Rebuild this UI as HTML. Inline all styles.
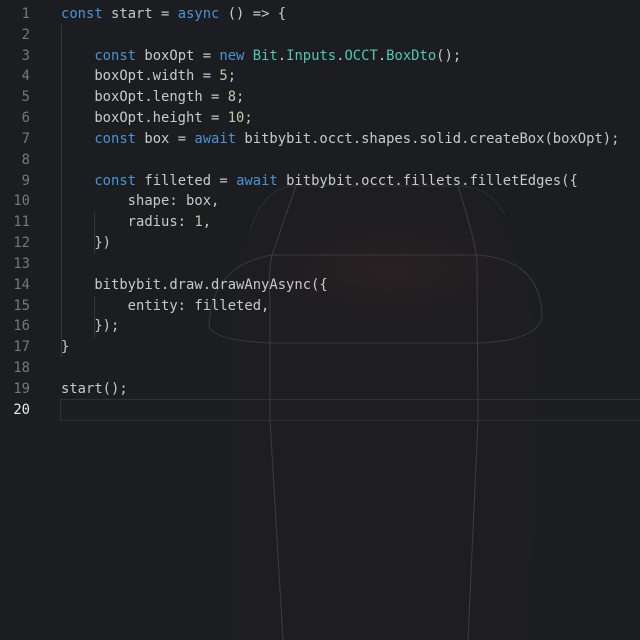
<!DOCTYPE html>
<html><head><style>
html,body{margin:0;padding:0;background:#1c1d21;width:640px;height:640px;overflow:hidden}
.wrap{position:relative;width:640px;height:640px}
svg{position:absolute;left:0;top:0}
.code{position:absolute;left:0;top:4px;font-family:"DejaVu Sans Mono","Liberation Mono",monospace;font-size:13.85px;color:#c8c9cb}
.l{height:20.84px;line-height:20.84px;white-space:pre;position:relative}
.n{display:inline-block;width:30px;text-align:right;color:#76777b;margin-right:31px}
.a .n{color:#e8e8e8}
.k{color:#4b93d4}.c{color:#4ec9b0}.m{color:#b5cea8}
.g{position:absolute;width:1px;background:#36373b}
.cur{position:absolute;left:60px;top:399px;width:590px;height:20px;border:1px solid #303135;border-right:none}
</style></head><body><div class="wrap">
<svg width="640" height="640">
<defs><radialGradient id="r" cx="0.5" cy="0.5" r="0.5"><stop offset="0" stop-color="#2e2222" stop-opacity="0.8"/><stop offset="1" stop-color="#1c1d21" stop-opacity="0"/></radialGradient></defs>
<path d="M230 355 Q230 210 290 180 L460 180 Q520 210 540 355 L530 640 L230 640 Z" fill="#1e1e21"/>
<ellipse cx="390" cy="270" rx="170" ry="70" fill="url(#r)"/>
<path d="M296 186 L272 255 Q268 275 270 300 L270 420 L283 640" fill="none" stroke="#3b3c40" stroke-width="1"/>
<path d="M458 186 Q475 240 477 260 L478 420 L468 640" fill="none" stroke="#3b3c40" stroke-width="1"/>
<path d="M272 255 L478 255 Q540 260 542 315 Q540 340 480 343 L270 343 Q210 340 209 325 Q212 265 272 255 Z" fill="none" stroke="#38393d" stroke-width="1"/>
<path d="M250 230 Q265 185 296 186 L458 186 Q490 186 505 215" fill="none" stroke="#2d2e31" stroke-width="1"/>
</svg>
<div class="g" style="left:61px;top:25px;height:332px"></div>
<div class="g" style="left:94px;top:212px;height:42px"></div>
<div class="g" style="left:94px;top:296px;height:42px"></div>
<div class="cur"></div>
<div class="code">
<div class="l"><span class="n">1</span><span class="k">const</span> start = <span class="k">async</span> () =&gt; {</div>
<div class="l"><span class="n">2</span></div>
<div class="l"><span class="n">3</span>    <span class="k">const</span> boxOpt = <span class="k">new</span> <span class="c">Bit</span>.<span class="c">Inputs</span>.<span class="c">OCCT</span>.<span class="c">BoxDto</span>();</div>
<div class="l"><span class="n">4</span>    boxOpt.width = <span class="m">5</span>;</div>
<div class="l"><span class="n">5</span>    boxOpt.length = <span class="m">8</span>;</div>
<div class="l"><span class="n">6</span>    boxOpt.height = <span class="m">10</span>;</div>
<div class="l"><span class="n">7</span>    <span class="k">const</span> box = <span class="k">await</span> bitbybit.occt.shapes.solid.createBox(boxOpt);</div>
<div class="l"><span class="n">8</span></div>
<div class="l"><span class="n">9</span>    <span class="k">const</span> filleted = <span class="k">await</span> bitbybit.occt.fillets.filletEdges({</div>
<div class="l"><span class="n">10</span>        shape: box,</div>
<div class="l"><span class="n">11</span>        radius: <span class="m">1</span>,</div>
<div class="l"><span class="n">12</span>    })</div>
<div class="l"><span class="n">13</span></div>
<div class="l"><span class="n">14</span>    bitbybit.draw.drawAnyAsync({</div>
<div class="l"><span class="n">15</span>        entity: filleted,</div>
<div class="l"><span class="n">16</span>    });</div>
<div class="l"><span class="n">17</span>}</div>
<div class="l"><span class="n">18</span></div>
<div class="l"><span class="n">19</span>start();</div>
<div class="l a"><span class="n">20</span></div>
</div>
</div></body></html>
